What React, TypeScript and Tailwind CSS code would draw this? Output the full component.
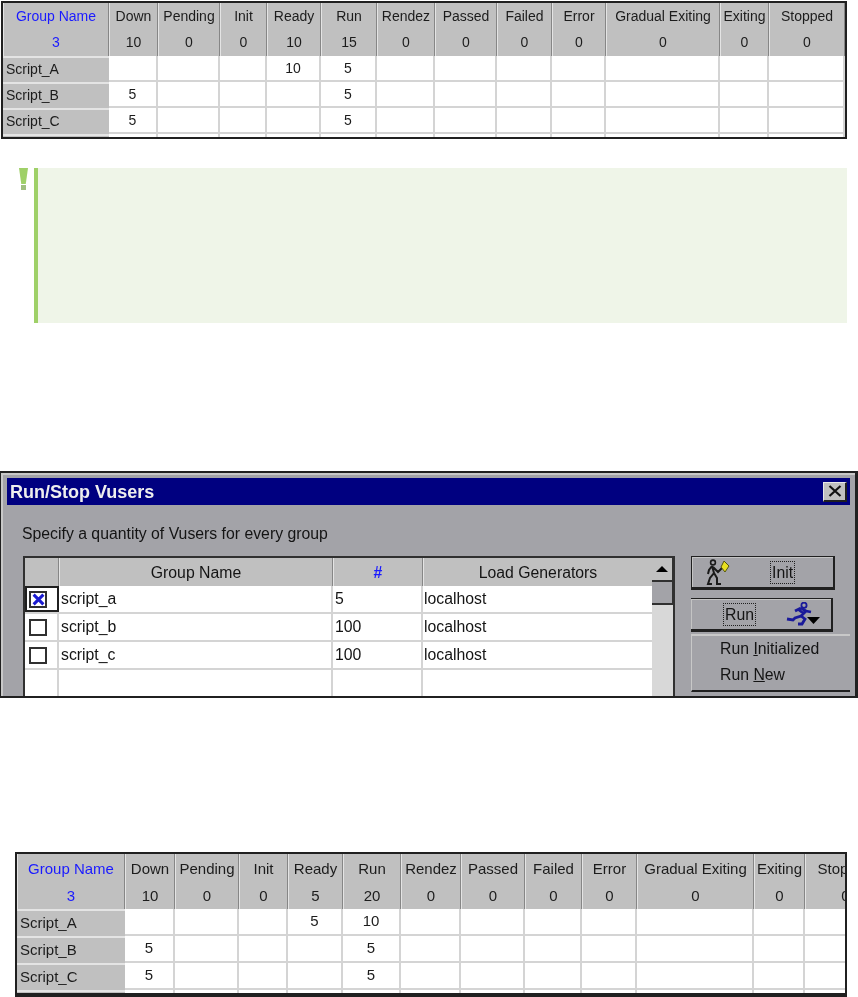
const headers1 = [
  ['Group Name', '3'],
  ['Down', '10'],
  ['Pending', '0'],
  ['Init', '0'],
  ['Ready', '10'],
  ['Run', '15'],
  ['Rendez', '0'],
  ['Passed', '0'],
  ['Failed', '0'],
  ['Error', '0'],
  ['Gradual Exiting', '0'],
  ['Exiting', '0'],
  ['Stopped', '0'],
];

const headers2 = headers1.map(([name, total]) => {
  if (name === 'Ready') return [name, '5'];
  if (name === 'Run') return [name, '20'];
  return [name, total];
});

const rows1 = [
  ['Script_A', '', '', '', '10', '5', '', '', '', '', '', '', ''],
  ['Script_B', '5', '', '', '', '5', '', '', '', '', '', '', ''],
  ['Script_C', '5', '', '', '', '5', '', '', '', '', '', '', ''],
  ['', '', '', '', '', '', '', '', '', '', '', '', ''],
];

const rows2 = [
  ['Script_A', '', '', '', '5', '10', '', '', '', '', '', '', ''],
  ['Script_B', '5', '', '', '', '5', '', '', '', '', '', '', ''],
  ['Script_C', '5', '', '', '', '5', '', '', '', '', '', '', ''],
  ['', '', '', '', '', '', '', '', '', '', '', '', ''],
];

function StatusGrid({
  headers,
  rows,
  cols,
  headerRow,
  bodyRow,
  textSize,
}: {
  headers: string[][];
  rows: string[][];
  cols: string;
  headerRow: string;
  bodyRow: string;
  textSize: string;
}) {
  return (
    <div className={`grid ${cols} ${textSize} w-max text-[#1c1c1c]`}>
      {headers.map(([name, total], i) => (
        <div
          key={name}
          className={`${headerRow} flex flex-col items-center justify-around whitespace-nowrap border-r border-l border-r-[#868686] border-l-[#e4e4e4] bg-[#c0c0c0] ${
            i === 0 ? 'text-[#1a1aff]' : ''
          }`}
        >
          <span>{name}</span>
          <span>{total}</span>
        </div>
      ))}
      {rows.map((row, r) =>
        row.map((cell, c) =>
          c === 0 ? (
            <div
              key={`${r}-${c}`}
              className={`${bodyRow} flex items-center border-t-2 border-t-[#e4e4e4] bg-[#c0c0c0] pb-[1px] pl-[3px]`}
            >
              {cell}
            </div>
          ) : (
            <div
              key={`${r}-${c}`}
              className={`${bodyRow} flex items-center justify-center border-r-2 border-b-2 border-[#d4d4d4] bg-white`}
            >
              {cell}
            </div>
          ),
        ),
      )}
    </div>
  );
}

function WalkerIcon() {
  return (
    <svg width="26" height="26" viewBox="0 0 26 26" fill="none">
      <circle cx="7" cy="3.5" r="2.4" stroke="#1a1a1a" strokeWidth="1.6" fill="#a3a3a8" />
      <path d="M6 7 L3 11 L2 15 M6 7 L8 14 L4 19 L2 25 L6 25 M8 14 L11 19 L11 25 L15 25 M7 8 L12 13 L16 9" stroke="#1a1a1a" strokeWidth="2" />
      <path d="M18 2 L23 7 L19 13 L15 8 Z" fill="#e8e020" stroke="#55550c" strokeWidth="1" />
    </svg>
  );
}

function RunnerIcon() {
  return (
    <svg width="36" height="24" viewBox="0 0 36 24" fill="none">
      <circle cx="18" cy="3.2" r="2.6" stroke="#1a1a9a" strokeWidth="1.8" fill="#a3a3a8" />
      <path d="M15 6 L9 9 M15 6 L20 9 L15 14 L9 16 L7 18 L1 17 M15 14 L19 17 L16 22 L12 22 M20 9 L25 10 M13 8 L17 11" stroke="#1a1a9a" strokeWidth="2.8" />
      <path d="M21 15 H34 L27.5 22 Z" fill="#000" />
    </svg>
  );
}

function CheckBox({ checked }: { checked?: boolean }) {
  return (
    <div className="flex h-[17px] w-[18px] items-center justify-center border-2 border-[#303030] bg-white">
      {checked && (
        <svg width="13" height="13" viewBox="0 0 12 12">
          <path d="M1.5 1.5 L10.5 10.5 M10.5 1.5 L1.5 10.5" stroke="#1a1ad0" strokeWidth="2.8" />
        </svg>
      )}
    </div>
  );
}

const scripts = [
  { name: 'script_a', qty: '5', host: 'localhost', checked: true },
  { name: 'script_b', qty: '100', host: 'localhost', checked: false },
  { name: 'script_c', qty: '100', host: 'localhost', checked: false },
  { name: '', qty: '', host: '', checked: false },
];

function RunStopDialog() {
  return (
    <div className="h-[227px] overflow-hidden border-t-2 border-r-[3px] border-b-2 border-l border-[#202020] bg-[#a3a3a8] text-[15.8px] text-[#141414]">
      <div className="h-full border-t-2 border-l-2 border-[#c8c8c8] pt-[3px] pr-[5px] pl-[4px]">
        <div className="flex h-[27px] items-center justify-between bg-[#000080] pr-[3px] pl-[3px]">
          <span className="pt-[1px] text-[18px] font-bold text-[#eeeeee]">Run/Stop Vusers</span>
          <div className="flex h-[20px] w-[24px] items-center justify-center border-t border-r-2 border-b-2 border-l border-t-[#e8e8e8] border-r-[#202020] border-b-[#202020] border-l-[#e8e8e8] bg-[#c0c0c0]">
            <svg width="14" height="12" viewBox="0 0 14 12">
              <path d="M1.5 1 L12.5 11 M12.5 1 L1.5 11" stroke="#111" strokeWidth="2.2" />
            </svg>
          </div>
        </div>
        <div className="pt-[20px] pl-[15px] leading-[18px]">Specify a quantity of Vusers for every group</div>
        <div className="flex pt-[13px] pl-[16px]">
          <div className="flex h-[142px] w-[652px] border-t-2 border-r-2 border-l-2 border-[#303030] bg-white">
            <div className="w-[627px]">
              <div className="grid h-[28px] grid-cols-[34px_274px_90px_229px] bg-[#c0c0c0]">
                <div className="border-r border-r-[#868686]" />
                <div className="flex items-center justify-center border-r border-l border-r-[#868686] border-l-[#e4e4e4] pt-[2px]">Group Name</div>
                <div className="flex items-center justify-center border-r border-l border-r-[#868686] border-l-[#e4e4e4] pt-[2px] font-bold text-[#1a1aff]">#</div>
                <div className="flex items-center justify-center border-l border-l-[#e4e4e4] pt-[2px]">Load Generators</div>
              </div>
              {scripts.map((s) => (
                <div key={s.name || 'empty'} className="grid h-[28px] grid-cols-[34px_274px_90px_229px] border-b-2 border-b-[#d4d4d4]">
                  <div className={`flex items-center justify-start border-r-2 border-[#d4d4d4] pl-[4px] ${s.checked ? 'outline-2 -outline-offset-2 outline-[#202020]' : ''}`}>
                    {s.name && <CheckBox checked={s.checked} />}
                  </div>
                  <div className="flex items-center border-r-2 border-[#d4d4d4] pl-[2px]">{s.name}</div>
                  <div className="flex items-center border-r-2 border-[#d4d4d4] pl-[2px]">{s.qty}</div>
                  <div className="flex items-center pl-[1px]">{s.host}</div>
                </div>
              ))}
            </div>
            <div className="w-[23px] bg-[#d8d8d8]">
              <div className="flex h-[24px] items-center justify-center border-r border-b-2 border-[#303030] bg-[#c0c0c0]">
                <div className="size-0 border-x-[6px] border-b-[6px] border-x-transparent border-b-black" />
              </div>
              <div className="h-[23px] border-r border-b-2 border-[#303030] bg-[#a3a3a8]" />
            </div>
          </div>
          <div className="ml-[16px] w-[161px]">
            <div className="flex h-[34px] w-[144px] items-center border-t border-r-2 border-b-[3px] border-l border-[#202020] bg-[#a3a3a8] shadow-[inset_1px_1px_0_#c4c4c4]">
              <div className="ml-[14px] flex">
                <WalkerIcon />
              </div>
              <span className="ml-[38px] border border-dotted border-[#202020] px-[1px] leading-[21px]">Init</span>
            </div>
            <div className="mt-[8px] flex h-[34px] w-[142px] items-center border-t border-r-2 border-b-[3px] border-[#202020] bg-[#a3a3a8] shadow-[inset_1px_1px_0_#c4c4c4]">
              <span className="ml-[32px] border border-dotted border-[#202020] px-[1px] leading-[21px]">Run</span>
              <div className="ml-[30px] flex">
                <RunnerIcon />
              </div>
            </div>
            <div className="mt-[2px] h-[58px] border-t-2 border-b-2 border-l border-t-[#c8c8c8] border-b-[#202020] border-l-[#c8c8c8] pl-[28px] leading-[26px]">
              <div>
                Run <span className="underline">I</span>nitialized
              </div>
              <div>
                Run <span className="underline">N</span>ew
              </div>
            </div>
          </div>
        </div>
      </div>
    </div>
  );
}

export default function App() {
  return (
    <div className="h-[997px] w-[858px] overflow-hidden bg-white font-['Liberation_Sans',Arial,sans-serif] blur-[0.45px]">
      <div className="ml-[1px] w-[846px] pt-[1px]">
        <div className="h-[138px] overflow-hidden border-2 border-[#202020]">
          <StatusGrid
            headers={headers1}
            rows={rows1}
            cols="grid-cols-[106px_49px_62px_47px_54px_56px_58px_62px_55px_54px_114px_49px_76px]"
            headerRow="h-[53px]"
            bodyRow="h-[26px]"
            textSize="text-[14px]"
          />
        </div>
      </div>

      <div className="mt-[29px] flex">
        <div className="ml-[19px] w-[15px]">
          <div className="h-[16px] w-[9px] bg-[#9fd068] [clip-path:polygon(0_0,100%_0,75%_100%,25%_100%)]" />
          <div className="mt-[1px] ml-[2px] h-[5px] w-[5px] bg-[#a0bf80]" />
        </div>
        <div className="h-[155px] w-[813px] border-l-4 border-l-[#9fd068] bg-[#eff5e8]" />
      </div>

      <div className="mt-[148px]">
        <RunStopDialog />
      </div>

      <div className="mt-[154px] ml-[15px] w-[832px]">
        <div className="h-[145px] overflow-hidden border-t-2 border-r-2 border-b-[4px] border-l-2 border-[#202020]">
          <StatusGrid
            headers={headers2}
            rows={rows2}
            cols="grid-cols-[108px_50px_64px_49px_55px_58px_60px_64px_57px_55px_117px_51px_81px]"
            headerRow="h-[55px] pt-[2px]"
            bodyRow="h-[27px]"
            textSize="text-[15px]"
          />
        </div>
      </div>
    </div>
  );
}
